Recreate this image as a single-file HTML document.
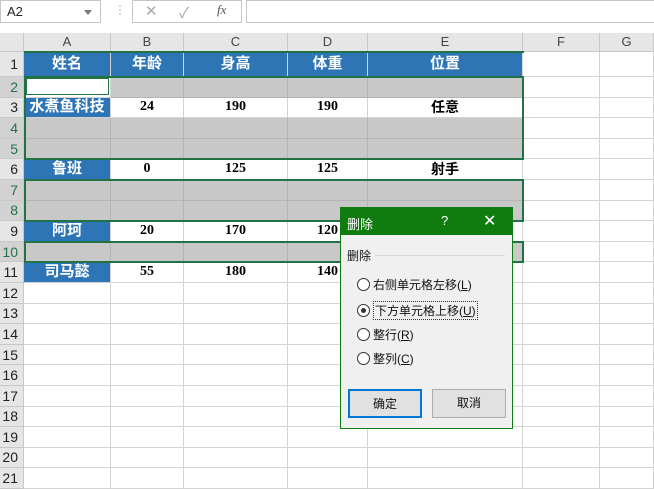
<!DOCTYPE html><html><head><meta charset="utf-8"><style>
*{box-sizing:border-box;margin:0;padding:0}
body{width:654px;height:485px;overflow:hidden;background:#fff;font-family:"Liberation Sans","Noto Sans CJK SC",sans-serif;position:relative}
.fb{position:absolute;left:0;top:0;width:654px;height:33px;background:#fff}
.nb{position:absolute;left:0;top:0;width:101px;height:23px;border:1px solid #c6c6c6;font-size:13px;padding:3px 6px;color:#222}
.nb:after{content:"";position:absolute;right:8px;top:9px;border:4px solid transparent;border-top:5px solid #777}
.fx{position:absolute;left:132px;top:0;width:110px;height:23px;border:1px solid #c6c6c6;color:#aaa;font-size:15px}
.fi{position:absolute;left:246px;top:0;width:410px;height:23px;border:1px solid #c6c6c6}
.gr{position:absolute;left:0;top:33px;display:grid;grid-template-columns:24px 87px 73px 104px 80px 155px 77px 54px;grid-template-rows:19px 25px repeat(20,20.6px)}
.gr>div{border-right:1px solid #d4d4d4;border-bottom:1px solid #d4d4d4;font-size:14px;text-align:center;font-weight:bold;font-family:"Liberation Serif","Noto Serif CJK SC",serif;white-space:nowrap;overflow:hidden;display:flex;align-items:center;justify-content:center;line-height:16px}
.gr>div.c{background:#e6e6e6;font-weight:normal;font-family:"Liberation Sans",sans-serif;font-size:13px;color:#444;border-color:#c8c8c8}
.gr>div.n{background:#e6e6e6;font-weight:normal;font-family:"Liberation Sans",sans-serif;font-size:14px;color:#222;justify-content:flex-end;padding-right:5px;border-color:#c8c8c8}
.gr>div.s{background:#d2d2d2;color:#217346}
.gr>div.b{background:#2e75b6;color:#fff;font-family:"Liberation Sans","Noto Sans CJK SC",sans-serif;font-size:15px}
.gr>div.g{background:#c8c8c8;border-color:#b4b4b4}
.gr>div.k{font-family:"Liberation Sans","Noto Sans CJK SC",sans-serif}
.sel{position:absolute;border:2px solid #217346;left:24px;width:500px}
.dlg{position:absolute;left:340px;top:207px;width:173px;height:222px;background:#f0f0f0;border:1px solid #107c10;font-family:"Liberation Sans","Noto Sans CJK SC",sans-serif;font-size:12px;color:#111}
.tt{height:27px;background:#107c10;color:#fff;position:relative;padding:6px 6px;font-size:13px}
.r{position:absolute;left:16px;display:flex;align-items:center}
.r i{width:13px;height:13px;border:1px solid #333;border-radius:50%;background:#fff;margin-right:3px;display:inline-block;position:relative}
.btn{position:absolute;top:181px;width:74px;height:29px;border:1px solid #adadad;background:#e1e1e1;text-align:center;line-height:27px}
</style></head><body>
<div class="fb"><div class="nb">A2</div><div style="position:absolute;left:114px;top:3px;color:#aaa;font-size:12px">⋮</div>
<div class="fx"><span style="position:absolute;left:12px;top:1px">✕</span><span style="position:absolute;left:46px;top:1px">✓</span><span style="position:absolute;left:84px;top:1px;font-family:'Liberation Serif';font-style:italic;color:#555;font-size:13px">fx</span></div><div class="fi"></div></div>
<div class="gr">
<div class="c"></div><div class="c">A</div><div class="c">B</div><div class="c">C</div><div class="c">D</div><div class="c">E</div><div class="c">F</div><div class="c">G</div>
<div class="n">1</div><div class="b">姓名</div><div class="b">年龄</div><div class="b">身高</div><div class="b">体重</div><div class="b">位置</div><div></div><div></div>
<div class="n s">2</div><div></div><div class="g"></div><div class="g"></div><div class="g"></div><div class="g"></div><div></div><div></div>
<div class="n">3</div><div class="b">水煮鱼科技</div><div>24</div><div>190</div><div>190</div><div class="k">任意</div><div></div><div></div>
<div class="n s">4</div><div class="g"></div><div class="g"></div><div class="g"></div><div class="g"></div><div class="g"></div><div></div><div></div>
<div class="n s">5</div><div class="g"></div><div class="g"></div><div class="g"></div><div class="g"></div><div class="g"></div><div></div><div></div>
<div class="n">6</div><div class="b">鲁班</div><div>0</div><div>125</div><div>125</div><div class="k">射手</div><div></div><div></div>
<div class="n s">7</div><div class="g"></div><div class="g"></div><div class="g"></div><div class="g"></div><div class="g"></div><div></div><div></div>
<div class="n s">8</div><div class="g"></div><div class="g"></div><div class="g"></div><div class="g"></div><div class="g"></div><div></div><div></div>
<div class="n">9</div><div class="b">阿珂</div><div>20</div><div>170</div><div>120</div><div></div><div></div><div></div>
<div class="n s">10</div><div class="g"></div><div class="g"></div><div class="g"></div><div class="g"></div><div class="g"></div><div></div><div></div>
<div class="n">11</div><div class="b">司马懿</div><div>55</div><div>180</div><div>140</div><div></div><div></div><div></div>
<div class="n">12</div><div></div><div></div><div></div><div></div><div></div><div></div><div></div>
<div class="n">13</div><div></div><div></div><div></div><div></div><div></div><div></div><div></div>
<div class="n">14</div><div></div><div></div><div></div><div></div><div></div><div></div><div></div>
<div class="n">15</div><div></div><div></div><div></div><div></div><div></div><div></div><div></div>
<div class="n">16</div><div></div><div></div><div></div><div></div><div></div><div></div><div></div>
<div class="n">17</div><div></div><div></div><div></div><div></div><div></div><div></div><div></div>
<div class="n">18</div><div></div><div></div><div></div><div></div><div></div><div></div><div></div>
<div class="n">19</div><div></div><div></div><div></div><div></div><div></div><div></div><div></div>
<div class="n">20</div><div></div><div></div><div></div><div></div><div></div><div></div><div></div>
<div class="n">21</div><div></div><div></div><div></div><div></div><div></div><div></div><div></div>
</div>
<div class="sel" style="top:76px;height:84px"></div>
<div class="sel" style="top:179px;height:43px"></div>
<div class="sel" style="top:241px;height:22px"></div>
<div style="position:absolute;left:26px;top:78px;width:83px;height:17px;border:1px solid #217346;background:#fff"></div>
<div style="position:absolute;left:24px;top:51px;width:500px;height:2px;background:#217346"></div>
<div class="dlg">
<div class="tt">删除<span style="position:absolute;left:100px;top:5px">?</span><span style="position:absolute;left:142px;top:3px;font-size:16px">✕</span></div>
<div style="position:absolute;left:6px;top:39px">删除</div>
<div style="position:absolute;left:34px;top:47px;width:130px;border-top:1px solid #d8d8d8"></div>
<div class="r" style="top:68px"><i></i>右侧单元格左移(<u>L</u>)</div>
<div class="r" style="top:93px"><i><b style="position:absolute;left:3px;top:3px;width:5px;height:5px;border-radius:50%;background:#333"></b></i><span style="border:1px dotted #333;padding:0 1px">下方单元格上移(<u>U</u>)</span></div>
<div class="r" style="top:118px"><i></i>整行(<u>R</u>)</div>
<div class="r" style="top:142px"><i></i>整列(<u>C</u>)</div>
<div class="btn" style="left:7px;border:2px solid #0078d7">确定</div>
<div class="btn" style="left:91px">取消</div>
</div>
</body></html>
